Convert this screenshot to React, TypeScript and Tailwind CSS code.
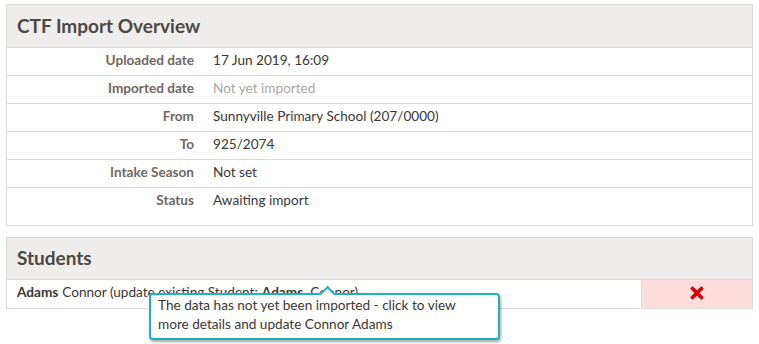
const rows = [
  { label: "Uploaded date", value: "17 Jun 2019, 16:09" },
  { label: "Imported date", value: "Not yet imported", muted: true },
  { label: "From", value: "Sunnyville Primary School (207/0000)" },
  { label: "To", value: "925/2074" },
  { label: "Intake Season", value: "Not set" },
  { label: "Status", value: "Awaiting import" },
];

const App = () => {
  return (
    <div
      className="w-[759px] h-[344px] bg-white px-[6px] pt-[4px] text-[#333] overflow-hidden"
      style={{ fontFamily: "Lato, 'Open Sans', sans-serif" }}
    >
      <section className="border border-[#dcdad8]">
        <div className="h-[43px] bg-[#eeedeb] border-b border-[#dcdad8] px-[10px] flex items-center">
          <h2 className="text-[19px] font-bold text-[#4d4844]">CTF Import Overview</h2>
        </div>
        <div className="pb-[9px]">
          {rows.map((row, i) => (
            <div
              key={row.label}
              className={`flex h-[28px] items-center pb-[3px] text-[13.6px] ${i < rows.length - 1 ? "border-b border-[#dcdad8]" : ""}`}
            >
              <div className="w-[187px] text-right font-bold text-[#6f6862]">{row.label}</div>
              <div className={`pl-[19px] ${row.muted ? "text-[#a9a6a3]" : "text-[#3a3735]"}`}>{row.value}</div>
            </div>
          ))}
        </div>
      </section>

      <section className="mt-[11px] border border-[#dcdad8] relative">
        <div className="h-[42px] bg-[#eeedeb] border-b border-[#dcdad8] px-[10px] flex items-center">
          <h2 className="text-[19px] font-bold text-[#4d4844]">Students</h2>
        </div>
        <div className="flex h-[28px] text-[13.6px] text-[#3a3735]">
          <div className="flex-1 flex items-center pb-[3px] px-[10px]">
            <span className="font-bold">Adams</span>
            <span className="ml-[4px]">Connor (update existing Student: </span>
            <span className="font-bold ml-[4px]">Adams,</span>
            <span className="ml-[4px]">Connor)</span>
          </div>
          <div className="w-[111px] bg-[#fedddf] border-l border-[#dcdad8] flex items-center justify-center pb-[2px]">
            <svg width="14" height="14" viewBox="0 0 14 14">
              <path d="M2.5 2.5 L11.5 11.5 M11.5 2.5 L2.5 11.5" stroke="#dd0000" strokeWidth="3.8" strokeLinecap="round" />
            </svg>
          </div>
        </div>

        <div className="absolute left-[142px] top-[55px] w-[351px] rounded-[4px] border-2 border-[#1eb2c2] bg-white px-[7px] pt-[1px] pb-[4px] text-[13.6px] leading-[19px] text-[#3a3735] shadow-[1px_2px_3px_rgba(0,0,0,0.35)]">
          <div className="absolute -top-[7px] left-[171px] w-[11px] h-[11px] rotate-45 bg-white border-l-2 border-t-2 border-[#1eb2c2]" />
          <span className="relative">
            The data has not yet been imported - click to view
            <br />
            more details and update Connor Adams
          </span>
        </div>
      </section>
    </div>
  );
};

export default App;
